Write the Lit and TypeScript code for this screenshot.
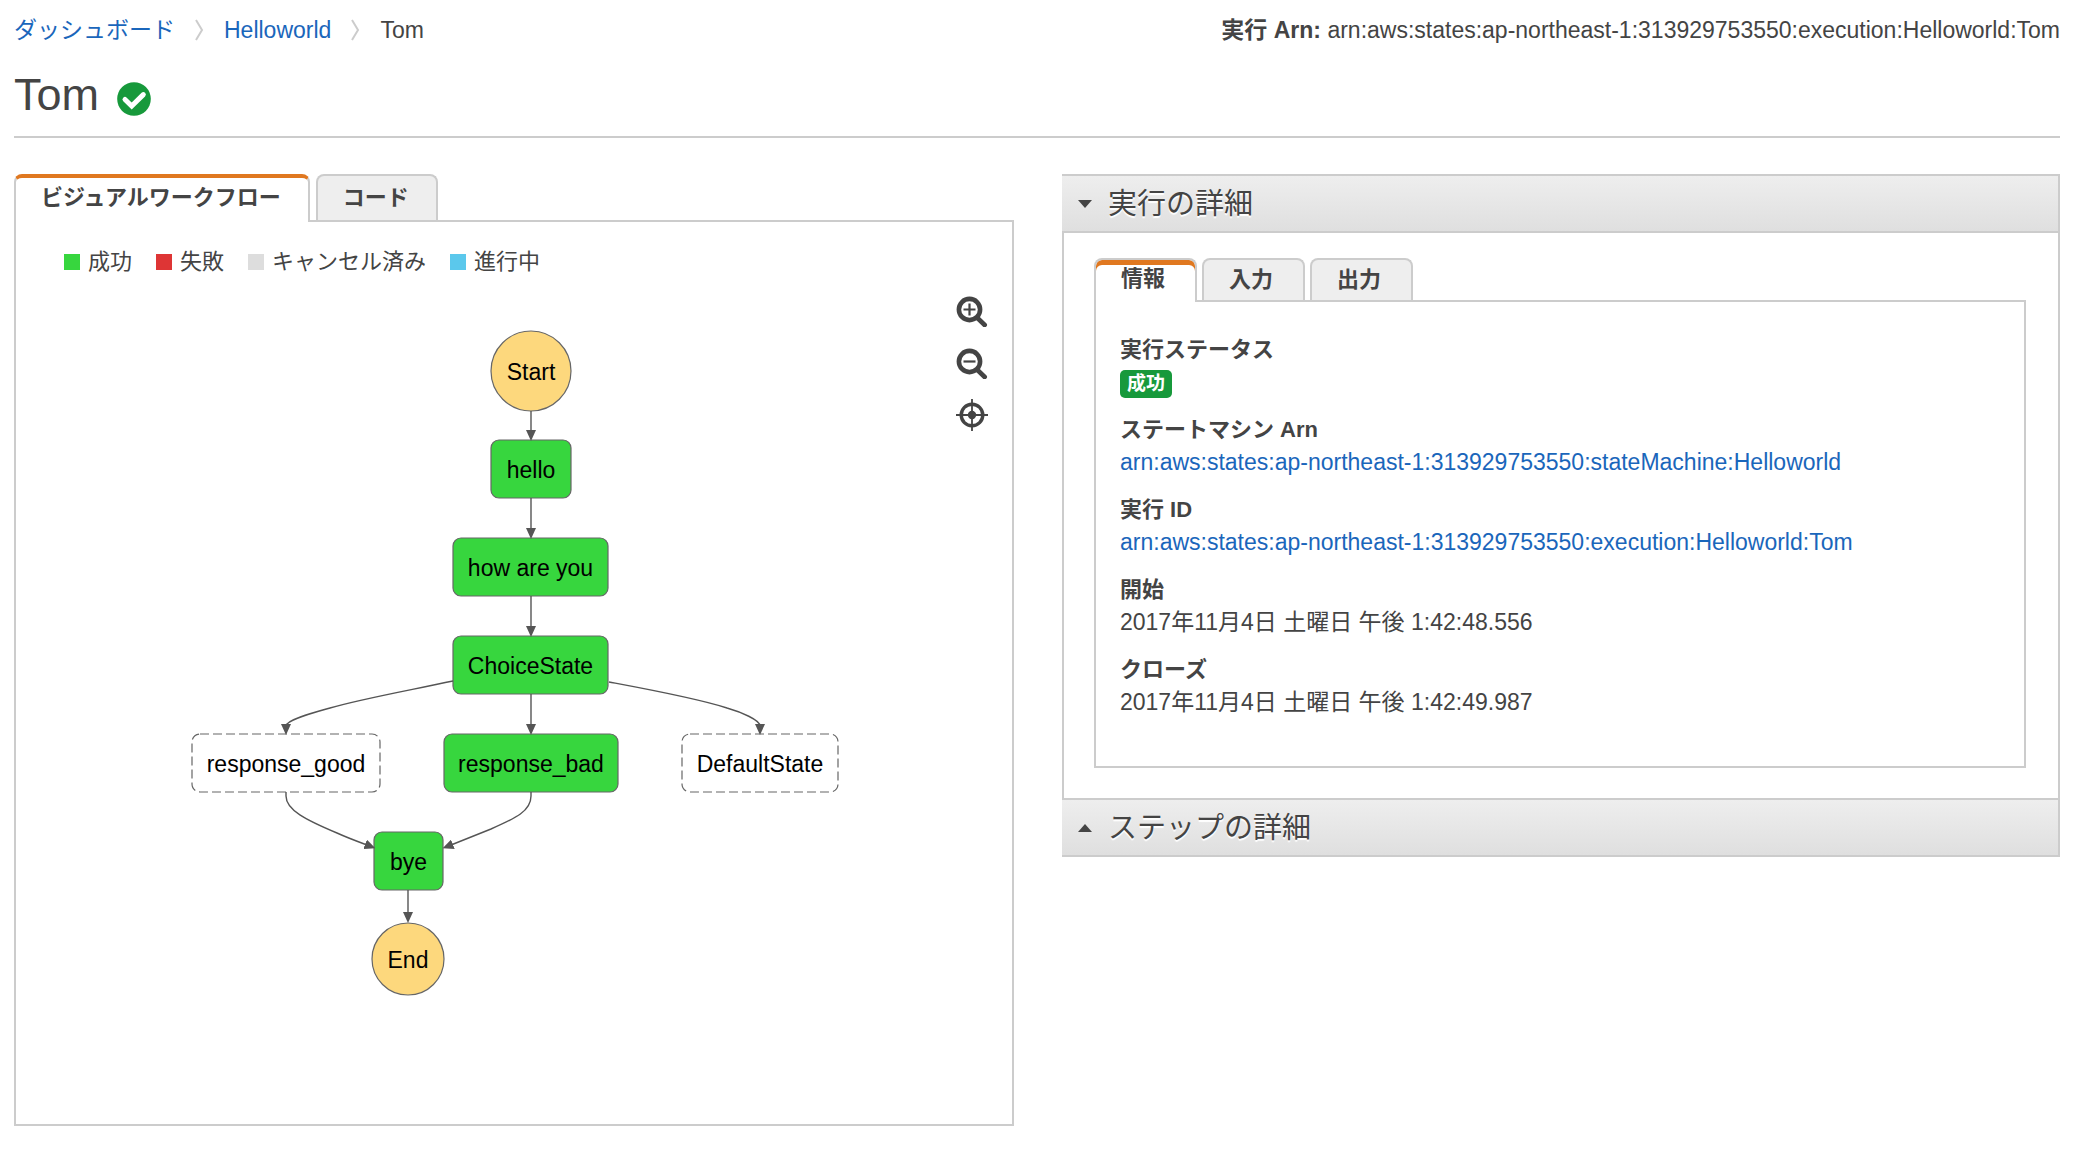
import { LitElement, html, svg, css } from "lit";
import { customElement, property, state } from "lit/decorators.js";
import { classMap } from "lit/directives/class-map.js";

type Status = "succeeded" | "idle" | "terminal";

interface BoxNode {
  label: string;
  x: number;
  y: number;
  width: number;
  status: Status;
}

const NODE_HEIGHT = 58;

const BOXES: BoxNode[] = [
  { label: "hello", x: 475, y: 150, width: 80, status: "succeeded" },
  { label: "how are you", x: 437, y: 248, width: 155, status: "succeeded" },
  { label: "ChoiceState", x: 437, y: 346, width: 155, status: "succeeded" },
  { label: "response_good", x: 176, y: 444, width: 188, status: "idle" },
  { label: "response_bad", x: 428, y: 444, width: 174, status: "succeeded" },
  { label: "DefaultState", x: 666, y: 444, width: 156, status: "idle" },
  { label: "bye", x: 358, y: 542, width: 69, status: "succeeded" },
];

const CIRCLES = [
  { label: "Start", cx: 515, cy: 81, r: 40 },
  { label: "End", cx: 392, cy: 669, r: 36 },
];

const EDGES = [
  "M515 121 V142",
  "M515 208 V240",
  "M515 306 V338",
  "M515 404 V436",
  "M437 391 C390 401 345 409 314 418 C296 423 270 430 270 436",
  "M593 392 C625 398 680 408 711 418 C725 422 744 430 744 436",
  "M270 502 V506 C270 520 290 530 321 543 C332 548 343 552 351 555",
  "M515 502 V506 C515 521 500 528 475 539 C460 545 445 551 435 555",
  "M392 600 V624",
];

@customElement("workflow-graph")
export class WorkflowGraph extends LitElement {
  static styles = css`
    :host {
      display: block;
    }
    .canvas {
      display: block;
      width: 100%;
      height: 834px;
    }
    .edge {
      fill: none;
      stroke: #555;
      stroke-width: 1.4;
    }
    .arrow {
      fill: #555;
    }
    .shape {
      stroke: #666;
      stroke-width: 1.2;
    }
    .succeeded {
      fill: #37d63e;
    }
    .terminal {
      fill: #fdd87d;
    }
    .idle {
      fill: #fff;
      stroke-dasharray: 9 4;
    }
    .label {
      font-family: "Liberation Sans", "Noto Sans CJK JP", sans-serif;
      font-size: 23px;
      fill: #000;
      text-anchor: middle;
    }
  `;

  render() {
    return html`
      <svg class="canvas" role="img" aria-label="Helloworld">
        <defs>
          <marker id="arrow" markerUnits="userSpaceOnUse" markerWidth="11" markerHeight="10"
            refX="2" refY="5" orient="auto">
            <path class="arrow" d="M0 0 L11 5 L0 10 Z"></path>
          </marker>
        </defs>
        ${BOXES.map(
          (n) => svg`
            <rect class="shape ${n.status}" x=${n.x} y=${n.y} width=${n.width}
              height=${NODE_HEIGHT} rx="8"></rect>
            <text class="label" x=${n.x + n.width / 2} y=${n.y + 38}>${n.label}</text>`
        )}
        ${CIRCLES.map(
          (c) => svg`
            <circle class="shape terminal" cx=${c.cx} cy=${c.cy} r=${c.r}></circle>
            <text class="label" x=${c.cx} y=${c.cy + 9}>${c.label}</text>`
        )}
        ${EDGES.map((d) => svg`<path class="edge" d=${d} marker-end="url(#arrow)"></path>`)}
      </svg>
    `;
  }
}

@customElement("tab-strip")
export class TabStrip extends LitElement {
  @property({ attribute: false }) tabs: string[] = [];
  @property({ type: Boolean, reflect: true }) compact = false;
  @state() private active = 0;

  static styles = css`
    :host {
      display: block;
    }
    .strip {
      display: flex;
      gap: 6px;
    }
    .tab {
      box-sizing: border-box;
      height: 46px;
      margin: 0;
      padding: 0 27px 0 25px;
      border: 2px solid #ccc;
      border-bottom: 0;
      border-radius: 8px 8px 0 0;
      background: #eee;
      color: #444;
      font: bold 22px/42px "Liberation Sans", "Noto Sans CJK JP", sans-serif;
      white-space: nowrap;
      cursor: pointer;
    }
    .active {
      height: 48px;
      margin-bottom: -2px;
      border-top: 4px solid #e07820;
      background: #fff;
      line-height: 38px;
      padding-bottom: 4px;
      position: relative;
      z-index: 1;
    }
    :host([compact]) .strip {
      gap: 5px;
    }
    :host([compact]) .tab {
      height: 42px;
      padding: 0 30px 0 25px;
      line-height: 38px;
    }
    :host([compact]) .active {
      height: 44px;
      padding-bottom: 4px;
      border-top: 2px solid #ccc;
      box-shadow: inset 0 5px 0 #e07820;
    }
  `;

  render() {
    return html`
      <div class="strip" role="tablist">
        ${this.tabs.map(
          (label, i) => html`<button
            class=${classMap({ tab: true, active: i === this.active })}
            role="tab"
            aria-selected=${i === this.active ? "true" : "false"}
            @click=${() => (this.active = i)}
          >${label}</button>`
        )}
      </div>
    `;
  }
}

const LEGEND = [
  { label: "成功", kind: "ok" },
  { label: "失敗", kind: "failed" },
  { label: "キャンセル済み", kind: "cancelled" },
  { label: "進行中", kind: "running" },
];

const STATE_MACHINE_ARN = "arn:aws:states:ap-northeast-1:313929753550:stateMachine:Helloworld";
const EXECUTION_ARN = "arn:aws:states:ap-northeast-1:313929753550:execution:Helloworld:Tom";

@customElement("app-root")
export class AppRoot extends LitElement {
  @state() private detailsOpen = true;

  static styles = css`
    :host {
      display: block;
      min-height: 100vh;
      box-sizing: border-box;
      padding: 0 14px 34px;
      background: #fff;
      color: #444;
      font: 22px/32px "Liberation Sans", "Noto Sans CJK JP", sans-serif;
    }
    a {
      color: #1a66bb;
      text-decoration: none;
    }
    .topbar {
      display: flex;
      justify-content: space-between;
      padding-top: 14px;
      font-size: 23px;
    }
    .crumbs {
      display: flex;
      align-items: center;
      gap: 20px;
    }
    .chevron {
      display: block;
      width: 9px;
      height: 22px;
      fill: none;
      stroke: #ccc;
      stroke-width: 2;
    }
    .title {
      display: flex;
      align-items: center;
      gap: 18px;
      box-sizing: border-box;
      height: 92px;
      padding-top: 8px;
      border-bottom: 2px solid #ccc;
      margin-bottom: 36px;
    }
    .heading {
      margin: 0;
      font-size: 45px;
      font-weight: normal;
      line-height: 60px;
    }
    .check {
      width: 34px;
      height: 34px;
      margin-top: 8px;
    }
    .columns {
      display: grid;
      grid-template-columns: minmax(0, 500fr) minmax(0, 499fr);
      gap: 48px;
      align-items: start;
    }
    .panel {
      position: relative;
      border: 2px solid #ccc;
    }
    .legend {
      display: flex;
      gap: 24px;
      height: 68px;
      padding: 24px 48px 0;
      box-sizing: border-box;
      margin: 0;
      list-style: none;
    }
    .entry {
      display: flex;
      align-items: center;
      gap: 8px;
      height: 32px;
    }
    .swatch {
      width: 16px;
      height: 16px;
    }
    .ok {
      background: #37d63e;
    }
    .failed {
      background: #de3535;
    }
    .cancelled {
      background: #ddd;
    }
    .running {
      background: #5bc8ec;
    }
    .tools {
      position: absolute;
      top: 73px;
      right: 24px;
      display: flex;
      flex-direction: column;
      gap: 20px;
    }
    .tool {
      display: block;
      width: 32px;
      height: 32px;
      padding: 0;
      border: 0;
      background: none;
      cursor: pointer;
    }
    .glyph {
      display: block;
      width: 32px;
      height: 32px;
      fill: none;
      stroke: #444;
    }
    .bar {
      margin: 0;
      font: inherit;
    }
    .toggle {
      display: flex;
      align-items: center;
      gap: 16px;
      width: 100%;
      height: 59px;
      box-sizing: border-box;
      padding: 0 16px;
      border: 2px solid #ccc;
      border-left: 0;
      background: linear-gradient(#eee, #dfdfdf);
      color: #444;
      font: 29px/40px "Liberation Sans", "Noto Sans CJK JP", sans-serif;
      text-shadow: 0 2px 1px #fff;
      cursor: pointer;
    }
    .caret {
      width: 14px;
      height: 8px;
      fill: #444;
    }
    .body {
      padding: 25px 32px 30px 30px;
      border: 2px solid #ccc;
      border-width: 0 2px;
    }
    .facts {
      margin: 0;
      padding: 32px 24px 48px;
      display: flex;
      flex-direction: column;
      gap: 16px;
    }
    .term {
      font-weight: bold;
    }
    .value {
      margin: 0;
      font-size: 23px;
      overflow-wrap: anywhere;
    }
    .badge {
      display: inline-block;
      padding: 0 7px;
      border-radius: 5px;
      background: #17993b;
      color: #fff;
      font-size: 19px;
      font-weight: bold;
      line-height: 28px;
      vertical-align: top;
      margin-top: 4px;
    }
  `;

  private chevron() {
    return html`<svg class="chevron" viewBox="0 0 9 22" aria-hidden="true">
      <path d="M1 1 L7 11 L1 21"></path>
    </svg>`;
  }

  private fact(term: string, value: unknown) {
    return html`<div>
      <dt class="term">${term}</dt>
      <dd class="value">${value}</dd>
    </div>`;
  }

  render() {
    return html`
      <header>
        <div class="topbar">
          <nav class="crumbs">
            <a href="#">ダッシュボード</a>
            ${this.chevron()}
            <a href="#">Helloworld</a>
            ${this.chevron()}
            <span>Tom</span>
          </nav>
          <div><strong>実行 Arn:</strong> ${EXECUTION_ARN}</div>
        </div>
        <div class="title">
          <h1 class="heading">Tom</h1>
          <svg class="check" viewBox="0 0 34 34" aria-hidden="true">
            <circle cx="17" cy="17" r="16.8" fill="#17993b"></circle>
            <path d="M8 17.5 L14.7 24 L26.3 12.6" fill="none" stroke="#fff" stroke-width="5"
              stroke-linejoin="miter" stroke-linecap="round"></path>
          </svg>
        </div>
      </header>
      <main class="columns">
        <section>
          <tab-strip .tabs=${["ビジュアルワークフロー", "コード"]}></tab-strip>
          <div class="panel">
            <ul class="legend">
              ${LEGEND.map(
                (e) => html`<li class="entry"><span class="swatch ${e.kind}"></span>${e.label}</li>`
              )}
            </ul>
            <workflow-graph></workflow-graph>
            <div class="tools">
              <button class="tool" aria-label="+">
                <svg class="glyph" viewBox="0 0 32 32">
                  <circle cx="13.5" cy="14.5" r="10.6" stroke-width="4.6"></circle>
                  <path d="M22 23.5 L28.7 30" stroke-width="4.6" stroke-linecap="round"></path>
                  <path d="M7.5 14.5 H19.5 M13.5 8.5 V20.5" stroke-width="2.2"></path>
                </svg>
              </button>
              <button class="tool" aria-label="−">
                <svg class="glyph" viewBox="0 0 32 32">
                  <circle cx="13.5" cy="14.5" r="10.6" stroke-width="4.6"></circle>
                  <path d="M22 23.5 L28.7 30" stroke-width="4.6" stroke-linecap="round"></path>
                  <path d="M7.5 14.5 H19.5" stroke-width="2.2"></path>
                </svg>
              </button>
              <button class="tool" aria-label="⌖">
                <svg class="glyph" viewBox="0 0 32 32">
                  <circle cx="16" cy="16" r="10.8" stroke-width="3.4"></circle>
                  <circle cx="16" cy="16" r="4.2" fill="#444" stroke="none"></circle>
                  <path d="M0 16 H32 M16 0 V32" stroke-width="1.8"></path>
                </svg>
              </button>
            </div>
          </div>
        </section>
        <section>
          <h2 class="bar">
            <button
              class="toggle"
              aria-expanded=${this.detailsOpen ? "true" : "false"}
              @click=${() => (this.detailsOpen = !this.detailsOpen)}
            >
              <svg class="caret" viewBox="0 0 14 8" aria-hidden="true"><path d="M0 0 H14 L7 8 Z"></path></svg>
              実行の詳細
            </button>
          </h2>
          <div class="body" ?hidden=${!this.detailsOpen}>
            <tab-strip compact .tabs=${["情報", "入力", "出力"]}></tab-strip>
            <div class="panel">
              <dl class="facts">
                ${this.fact("実行ステータス", html`<span class="badge">成功</span>`)}
                ${this.fact("ステートマシン Arn", html`<a href="#">${STATE_MACHINE_ARN}</a>`)}
                ${this.fact("実行 ID", html`<a href="#">${EXECUTION_ARN}</a>`)}
                ${this.fact("開始", "2017年11月4日 土曜日 午後 1:42:48.556")}
                ${this.fact("クローズ", "2017年11月4日 土曜日 午後 1:42:49.987")}
              </dl>
            </div>
          </div>
          <h2 class="bar">
            <button class="toggle" aria-expanded="false">
              <svg class="caret" viewBox="0 0 14 8" aria-hidden="true"><path d="M0 8 H14 L7 0 Z"></path></svg>
              ステップの詳細
            </button>
          </h2>
        </section>
      </main>
    `;
  }
}
